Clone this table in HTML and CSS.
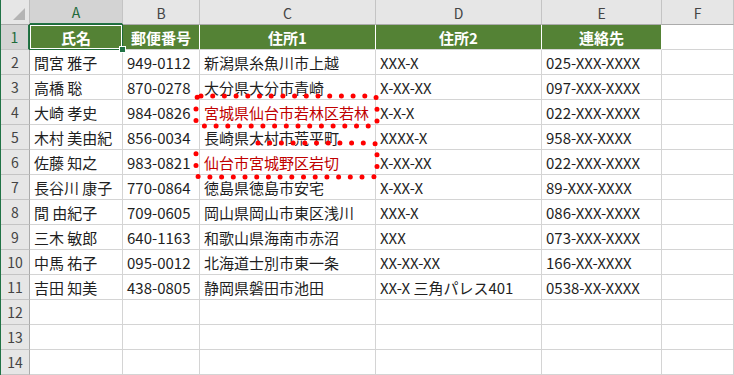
FILE: index.html
```html
<!DOCTYPE html>
<html lang="ja">
<head>
<meta charset="utf-8">
<title>Sheet</title>
<link rel="stylesheet" href="styles.css">
</head>
<body>
<div class="wrap">
  <div class="sheet">
    <div class="corner"></div>
    <div class="colh sel">A</div>
    <div class="colh">B</div>
    <div class="colh">C</div>
    <div class="colh">D</div>
    <div class="colh">E</div>
    <div class="colh">F</div>

    <div class="rowh sel">1</div>
    <div class="hd active">氏名</div>
    <div class="hd">郵便番号</div>
    <div class="hd">住所1</div>
    <div class="hd">住所2</div>
    <div class="hd">連絡先</div>
    <div class="c"></div>

    <div class="rowh">2</div>
    <div class="c">間宮 雅子</div><div class="c">949-0112</div><div class="c">新潟県糸魚川市上越</div><div class="c">XXX-X</div><div class="c">025-XXX-XXXX</div><div class="c"></div>

    <div class="rowh">3</div>
    <div class="c">高橋 聡</div><div class="c">870-0278</div><div class="c">大分県大分市青崎</div><div class="c">X-XX-XX</div><div class="c">097-XXX-XXXX</div><div class="c"></div>

    <div class="rowh">4</div>
    <div class="c">大崎 孝史</div><div class="c">984-0826</div><div class="c red">宮城県仙台市若林区若林</div><div class="c">X-X-X</div><div class="c">022-XXX-XXXX</div><div class="c"></div>

    <div class="rowh">5</div>
    <div class="c">木村 美由紀</div><div class="c">856-0034</div><div class="c">長崎県大村市荒平町</div><div class="c">XXXX-X</div><div class="c">958-XX-XXXX</div><div class="c"></div>

    <div class="rowh">6</div>
    <div class="c">佐藤 知之</div><div class="c">983-0821</div><div class="c red">仙台市宮城野区岩切</div><div class="c">X-XX-XX</div><div class="c">022-XXX-XXXX</div><div class="c"></div>

    <div class="rowh">7</div>
    <div class="c">長谷川 康子</div><div class="c">770-0864</div><div class="c">徳島県徳島市安宅</div><div class="c">X-XX-X</div><div class="c">89-XXX-XXXX</div><div class="c"></div>

    <div class="rowh">8</div>
    <div class="c">間 由紀子</div><div class="c">709-0605</div><div class="c">岡山県岡山市東区浅川</div><div class="c">XXX-X</div><div class="c">086-XXX-XXXX</div><div class="c"></div>

    <div class="rowh">9</div>
    <div class="c">三木 敏郎</div><div class="c">640-1163</div><div class="c">和歌山県海南市赤沼</div><div class="c">XXX</div><div class="c">073-XXX-XXXX</div><div class="c"></div>

    <div class="rowh">10</div>
    <div class="c">中馬 祐子</div><div class="c">095-0012</div><div class="c">北海道士別市東一条</div><div class="c">XX-XX-XX</div><div class="c">166-XX-XXXX</div><div class="c"></div>

    <div class="rowh">11</div>
    <div class="c">吉田 知美</div><div class="c">438-0805</div><div class="c">静岡県磐田市池田</div><div class="c">XX-X 三角パレス401</div><div class="c">0538-XX-XXXX</div><div class="c"></div>

    <div class="rowh">12</div>
    <div class="c"></div><div class="c"></div><div class="c"></div><div class="c"></div><div class="c"></div><div class="c"></div>

    <div class="rowh">13</div>
    <div class="c"></div><div class="c"></div><div class="c"></div><div class="c"></div><div class="c"></div><div class="c"></div>

    <div class="rowh">14</div>
    <div class="c"></div><div class="c"></div><div class="c"></div><div class="c"></div><div class="c"></div><div class="c"></div>
  </div>

  <svg class="marks" width="734" height="375" viewBox="0 0 734 375" xmlns="http://www.w3.org/2000/svg">
    <path class="dots" d="M201 96 H372 Q377 96 377 101 V121 Q377 126 372 126 H201 Q196 126 196 121 V101 Q196 96 201 96 Z"/>
    <path class="dots" d="M258 143 H372 Q377 143 377 148 V172 Q377 177 372 177 H201 Q196 177 196 172 V151"/>
  </svg>
</div>
</body>
</html>
```

FILE: styles.css
```css
html, body {
  margin: 0;
  padding: 0;
  background: #ffffff;
}

body {
  font-family: "Noto Sans CJK JP", "Noto Sans", sans-serif;
  font-size: 15px;
  color: #1a1a1a;
  overflow: hidden;
}

.wrap {
  position: relative;
  width: 734px;
  height: 375px;
  overflow: hidden;
}

.sheet {
  display: grid;
  grid-template-columns: 29px 93px 77px 176px 166px 120px 72px;
  grid-template-rows: repeat(15, 25px);
  border-left: 1px solid #217346;
  width: 733px;
}

.sheet > div {
  box-sizing: border-box;
  display: flex;
  align-items: center;
  white-space: nowrap;
  overflow: visible;
  line-height: 1;
}

.corner {
  position: relative;
  background: #e6e6e6;
  border-right: 1px solid #bdbdbd;
  border-bottom: 1px solid #ababab;
}

.corner::after {
  content: "";
  position: absolute;
  right: 4px;
  bottom: 4px;
  width: 12px;
  height: 12px;
  background: #b4b4b4;
  clip-path: polygon(100% 0, 100% 100%, 0 100%);
}

.colh {
  justify-content: center;
  background: #e6e6e6;
  border-right: 1px solid #c4c4c4;
  border-bottom: 1px solid #ababab;
  color: #444444;
  font-size: 14px;
  padding-top: 1px;
}

.colh.sel {
  background: #d3d3d3;
  color: #1e6b3a;
  border-bottom: 2px solid #217346;
}

.rowh {
  justify-content: center;
  background: #e6e6e6;
  border-right: 1px solid #ababab;
  border-bottom: 1px solid #c4c4c4;
  color: #444444;
  font-size: 14px;
}

.rowh.sel {
  background: #d3d3d3;
  color: #1e6b3a;
  border-right: 2px solid #217346;
}

.c {
  padding: 0 4px;
  border-right: 1px solid #d4d4d4;
  border-bottom: 1px solid #d4d4d4;
  color: #1f1f1f;
}

.c.red {
  color: #c00000;
}

.hd {
  justify-content: center;
  background: #548235;
  color: #ffffff;
  font-weight: 700;
  border-right: 1px solid #ffffff;
  border-bottom: 1px solid #d4d4d4;
}

.hd.active {
  position: relative;
}

.hd.active::after {
  content: "";
  position: absolute;
  left: 0;
  top: 0;
  right: 0;
  bottom: 0;
  border: 1px solid #ffffff;
  box-shadow: 0 0 0 1px #1e6b3a;
}

.hd.active::before {
  content: "";
  position: absolute;
  right: -4px;
  bottom: -4px;
  width: 5px;
  height: 5px;
  background: #217346;
  border: 1px solid #ffffff;
  z-index: 2;
}

.marks {
  position: absolute;
  left: 0;
  top: 0;
  pointer-events: none;
}

.dots {
  fill: none;
  stroke: #ff0000;
  stroke-width: 5;
  stroke-linecap: round;
  stroke-dasharray: 0 11.7;
}
```
